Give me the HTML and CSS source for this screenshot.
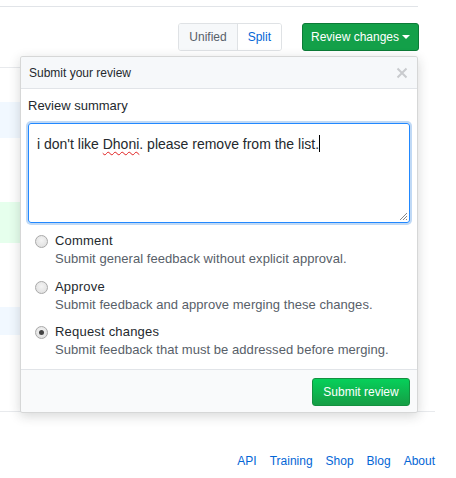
FILE: index.html
```html
<!DOCTYPE html>
<html>
<head>
<meta charset="utf-8">
<link rel="stylesheet" href="styles.css">
</head>
<body>
<div class="page">
  <div class="topline"></div>
  <div class="toolbar">
    <div class="seg">
      <span class="seg-item">Unified</span>
      <span class="seg-item active">Split</span>
    </div>
    <span class="btn-review">Review changes <span class="caret"></span></span>
  </div>

  <div class="stage">
    <div class="file">
      <div class="row r1"></div>
      <div class="row blue b1"></div>
      <div class="row r2"></div>
      <div class="row green"></div>
      <div class="row r3"></div>
      <div class="row blue b2"></div>
      <div class="row r4"></div>
    </div>

    <div class="popover">
      <div class="pop-header">
        <span>Submit your review</span>
        <svg class="close" width="12" height="12" viewBox="0 0 12 12"><path d="M1.5 1.5 L10.5 10.5 M10.5 1.5 L1.5 10.5" stroke="#c9cbce" stroke-width="2" fill="none"/></svg>
      </div>
      <div class="pop-body">
        <div class="label">Review summary</div>
        <div class="textarea">
          <span>i don't like <span class="typo">Dhoni</span>. please remove from the list.</span><span class="cursor"></span>
          <svg class="grip" width="9" height="9" viewBox="0 0 9 9"><path d="M8 1 L1 8 M8 4 L4 8 M8 7 L7 8" stroke="#888" stroke-width="1" fill="none"/></svg>
        </div>
        <div class="option first">
          <span class="radio"></span>
          <div class="opt-text">
            <div class="opt-title">Comment</div>
            <div class="opt-desc">Submit general feedback without explicit approval.</div>
          </div>
        </div>
        <div class="option">
          <span class="radio"></span>
          <div class="opt-text">
            <div class="opt-title">Approve</div>
            <div class="opt-desc">Submit feedback and approve merging these changes.</div>
          </div>
        </div>
        <div class="option">
          <span class="radio checked"></span>
          <div class="opt-text">
            <div class="opt-title">Request changes</div>
            <div class="opt-desc">Submit feedback that must be addressed before merging.</div>
          </div>
        </div>
      </div>
      <div class="pop-footer">
        <span class="btn-submit">Submit review</span>
      </div>
    </div>
  </div>

  <div class="footer-links">
    <a>API</a><a>Training</a><a>Shop</a><a>Blog</a><a>About</a>
  </div>
</div>
</body>
</html>
```

FILE: styles.css
```css
* { box-sizing: border-box; }
html, body { margin: 0; padding: 0; background: #fff; }
body {
  font-family: "Liberation Sans", Arial, sans-serif;
  color: #24292e;
  width: 456px;
  height: 478px;
  overflow: hidden;
}
.page { padding-top: 6px; }
.topline { width: 418px; height: 1px; background: #e1e4e8; }

.toolbar {
  width: 419px;
  display: flex;
  justify-content: flex-end;
  align-items: center;
  gap: 20px;
  margin-top: 16px;
  height: 28px;
}
.seg {
  display: flex;
  height: 28px;
  border: 1px solid #dfe2e5;
  border-radius: 3px;
  overflow: hidden;
  font-size: 12px;
}
.seg-item {
  display: flex;
  align-items: center;
  padding: 0 10px;
  background: #f6f8fa;
  color: #586069;
}
.seg-item.active {
  background: #fff;
  color: #0366d6;
  border-left: 1px solid #dfe2e5;
}
.btn-review {
  display: flex;
  align-items: center;
  height: 28px;
  width: 117px;
  justify-content: center;
  background: #13a049;
  border: 1px solid #0c7b37;
  border-radius: 3px;
  color: #fff;
  font-size: 12px;
  gap: 2px;
}
.caret {
  width: 0; height: 0;
  border-left: 4px solid transparent;
  border-right: 4px solid transparent;
  border-top: 4px solid #fff;
  margin-left: 1px;
}

.stage {
  position: relative;
  margin-top: 5px;
  height: 355px;
}
.file { padding-top: 11px; width: 418px; }
.row { width: 418px; }
.r1 { height: 35px; border-top: 1px solid #e8eaed; }
.blue { background: #f1f8ff; }
.b1 { height: 36px; }
.r2 { height: 64px; }
.green { height: 41px; background: #e6ffed; }
.r3 { height: 64px; }
.b2 { height: 28px; }
.r4 { height: 77px; border-bottom: 1px solid #e8eaed; width: 435px; }

.popover {
  position: absolute;
  left: 20px;
  top: 0;
  width: 398px;
  background: #fff;
  border: 1px solid rgba(27,31,35,0.18);
  border-radius: 3px;
  box-shadow: 0 3px 12px rgba(27,31,35,0.18);
  overflow: hidden;
}
.pop-header {
  height: 32px;
  background: #f6f8fa;
  border-bottom: 1px solid #e1e4e8;
  display: flex;
  align-items: center;
  justify-content: space-between;
  padding: 0 8px 0 8px;
  font-size: 12px;
  color: #24292e;
}
.close { margin-right: 1px; }
.pop-body { padding: 8px 7px 10px 7px; }
.label { font-size: 13px; line-height: 18px; margin-bottom: 8px; }
.textarea {
  position: relative;
  height: 100px;
  border: 1px solid #2188ff;
  border-radius: 3px;
  box-shadow: 0 0 0 2px rgba(3,102,214,0.25);
  padding: 10px 8px;
  font-size: 14px;
  line-height: 20px;
  color: #24292e;
}
.typo {
  text-decoration: underline wavy #e02020;
  text-decoration-thickness: 1px;
  text-underline-offset: 2px;
}
.cursor {
  display: inline-block;
  width: 1px;
  height: 17px;
  background: #000;
  vertical-align: -3px;
}
.grip { position: absolute; right: 1px; bottom: 1px; }

.option {
  display: flex;
  gap: 7px;
  margin-top: 10px;
  padding-left: 7px;
}
.option.first { margin-top: 9px; }
.radio {
  width: 13px;
  height: 13px;
  border-radius: 50%;
  border: 1px solid #a9a9a9;
  background: radial-gradient(circle at 50% 40%, #f4f4f4, #dcdcdc);
  margin-top: 3px;
  flex: none;
  display: flex;
  align-items: center;
  justify-content: center;
}
.radio.checked::after {
  content: "";
  width: 5px;
  height: 5px;
  border-radius: 50%;
  background: #444;
}
.opt-title { font-size: 13px; line-height: 18px; letter-spacing: 0.2px; }
.opt-desc { font-size: 13px; line-height: 17.5px; color: #586069; letter-spacing: 0.05px; }

.pop-footer {
  background: #f9fafb;
  border-top: 1px solid #e1e4e8;
  padding: 8px 7px 6px 7px;
  display: flex;
  justify-content: flex-end;
}
.btn-submit {
  display: flex;
  align-items: center;
  justify-content: center;
  width: 98px;
  height: 28px;
  background: linear-gradient(180deg, #06d05a, #15a046 95%);
  border: 1px solid #13903f;
  border-radius: 3px;
  color: #fff;
  font-size: 12px;
}

.footer-links {
  width: 435px;
  margin-top: 42px;
  display: flex;
  justify-content: flex-end;
  gap: 13px;
  font-size: 12px;
  line-height: 16px;
}
.footer-links a { color: #0366d6; text-decoration: none; }
```
